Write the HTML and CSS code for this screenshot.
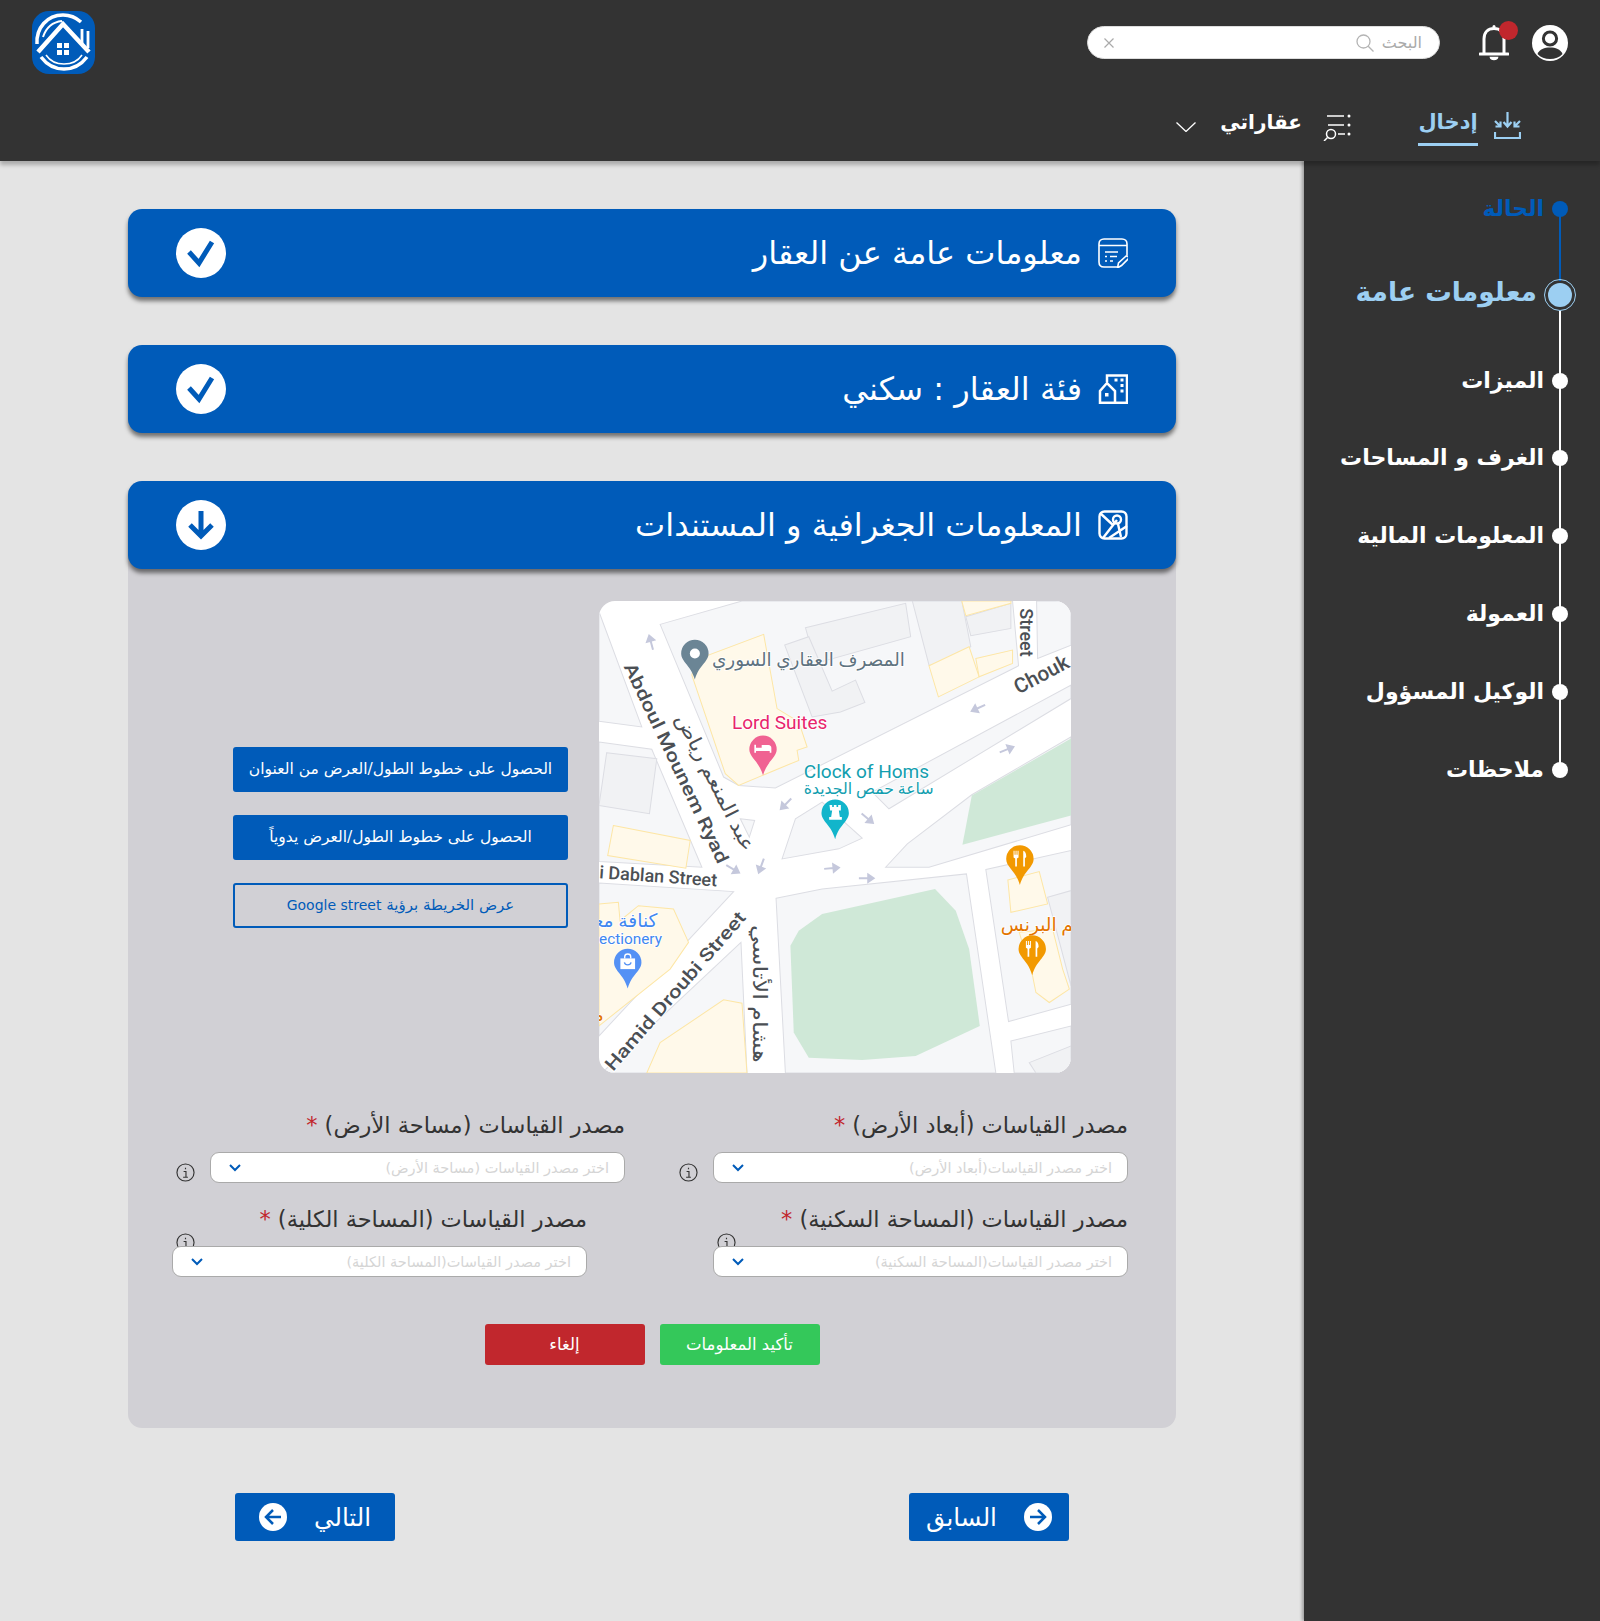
FILE: index.html
```html
<!DOCTYPE html>
<html lang="ar" dir="rtl">
<head>
<meta charset="utf-8">
<title>عقاراتي</title>
<link rel="stylesheet" href="styles.css">
</head>
<body>
<header class="topbar">
  <div class="topbar-row">
    <svg class="ic-user" viewBox="0 0 36 36"><circle cx="18" cy="18" r="18" fill="#fff"/><circle cx="18" cy="13.5" r="6.6" fill="none" stroke="#333" stroke-width="3"/><path d="M5.5 29c2-5 7-6.500 12.500-6.500S28.500 24 30.500 29c-3 3.500-7.500 5-12.500 5S8.500 32.500 5.500 29z" fill="#333"/></svg>
    <div class="bell-wrap">
      <svg class="ic-bell" viewBox="0 0 30 38" fill="none" stroke="#fff" stroke-width="3"><path d="M5 29V15C5 8.500 9 4.500 15 4.500S25 8.500 25 15v14"/><path d="M1 30h28" stroke-linecap="round" stroke-width="3"/><circle cx="15" cy="2.500" r="1.500" fill="#fff" stroke="none"/><path d="M11.500 33.500c.5 2.500 6.500 2.500 7 0z" fill="#fff" stroke-width="1.500"/></svg>
      <span class="bell-dot"></span>
    </div>
    <div class="search">
      <span class="search-ph">البحث</span>
      <svg class="ic-search" viewBox="0 0 18 18" fill="none" stroke="#b4b4b4" stroke-width="1.300"><circle cx="7.500" cy="7.500" r="6.500"/><path d="M12.200 12.200L17.500 17.500"/></svg>
      <svg class="ic-x" viewBox="0 0 10 10" fill="none" stroke="#aaa" stroke-width="1.200"><path d="M0.500 0.500l9 9M9.500 0.500l-9 9"/></svg>
    </div>
    <svg class="logo" viewBox="0 0 63 63">
      <rect width="63" height="63" rx="17" fill="#005bb9"/>
      <g fill="none" stroke="#fff">
        <path d="M5 33C4 17 15 4 31 4c7 0 13 2.500 18 7" stroke-width="3.500"/>
        <path d="M11 26C14 17 21 11 30 10" stroke-width="2"/>
        <path d="M6 41L31 13l26 28" stroke-width="4.500"/>
        <path d="M50 18v14M56 20v17" stroke-width="2.800"/>
        <path d="M9 46c6 8 13 12 23 12s17-4 23-12" stroke-width="3.500"/>
        <path d="M14 44c4 6 10 9 18 9s14-3 18-9" stroke-width="1.500"/>
      </g>
      <path d="M25 32h5v5h-5zM32 32h5v5h-5zM25 39h5v5h-5zM32 39h5v5h-5z" fill="#fff"/>
    </svg>
  </div>
  <nav class="topbar-nav">
    <a class="nav-tab">
      <svg class="ic-in" viewBox="0 0 27 27" fill="none" stroke="#9ccff2" stroke-width="2.200"><path d="M13.500 0v14M9.500 10l4 4.500 4-4.500"/><path d="M1 9l5 5M6.500 9.500v5h-5M26 9l-5 5M20.500 9.500v5h5"/><path d="M1 20v6h25v-6"/></svg>
      <span class="nav-tab-text">إدخال</span>
    </a>
    <a class="nav-menu">
      <svg class="ic-filter" viewBox="0 0 28 27" fill="none" stroke="#fff" stroke-width="1.500"><path d="M4 2h17M5 11h16M15 20h7"/><circle cx="26" cy="2" r="1.500" fill="#fff" stroke="none"/><circle cx="26" cy="11" r="1.500" fill="#fff" stroke="none"/><circle cx="26" cy="20" r="1.500" fill="#fff" stroke="none"/><circle cx="8" cy="20" r="4.500"/><path d="M4.500 23.500L1 27"/></svg>
      <span class="nav-menu-text">عقاراتي</span>
      <svg class="ic-chev" viewBox="0 0 20 10" fill="none" stroke="#fff" stroke-width="1.300"><path d="M.5.500L10 9.500 19.500.500"/></svg>
    </a>
  </nav>
</header>

<div class="layout">
  <aside class="sidebar">
    <ol class="steps">
      <li class="step step-done"><span class="step-dot"></span><span>الحالة</span></li>
      <li class="step step-active"><span class="step-dot"></span><span class="step-label">معلومات عامة</span></li>
      <li class="step"><span class="step-dot"></span><span>الميزات</span></li>
      <li class="step"><span class="step-dot"></span><span>الغرف و المساحات</span></li>
      <li class="step"><span class="step-dot"></span><span>المعلومات المالية</span></li>
      <li class="step"><span class="step-dot"></span><span>العمولة</span></li>
      <li class="step"><span class="step-dot"></span><span>الوكيل المسؤول</span></li>
      <li class="step"><span class="step-dot"></span><span>ملاحظات</span></li>
    </ol>
  </aside>

  <main class="content">
    <section class="acc">
      <svg class="acc-icon" viewBox="0 0 30 30" fill="none" stroke="#fff" stroke-width="1.600"><path d="M29 17V6c0-3-2-5-5-5H6C3 1 1 3 1 6v18c0 3 2 5 5 5h13"/><path d="M1 7.500h28M7 14h13M7 18.500h2M12 18.500h7M7 23h2M12 23h3"/><path d="M19.500 30l1-5 7-6.500c2-1.500 4 .5 2.500 2.500L23.500 27.500z" fill="#005bb9"/></svg>
      <h2 class="acc-title">معلومات عامة عن العقار</h2>
      <svg class="acc-state" viewBox="0 0 50 50"><circle cx="25" cy="25" r="25" fill="#fff"/><path d="M13 24l10 11L36 14" fill="none" stroke="#005bb9" stroke-width="5"/></svg>
    </section>
    <section class="acc">
      <svg class="acc-icon" viewBox="0 0 30 30" fill="none" stroke="#fff" stroke-width="2.500"><path d="M9 8V1.500h20V29H2V17l7-8 8 8v12"/><path d="M16.500 4.500h3v3h-3zM22.500 4.500h3v3h-3zM20 10.500h2M22.500 10h3v3h-3zM20 16h2M22.500 15.500h3v3h-3zM7 19h3.500v3.500H7z" fill="#fff" stroke="none"/><path d="M2 29h27" stroke-width="2.600"/></svg>
      <h2 class="acc-title">فئة العقار : سكني</h2>
      <svg class="acc-state" viewBox="0 0 50 50"><circle cx="25" cy="25" r="25" fill="#fff"/><path d="M13 24l10 11L36 14" fill="none" stroke="#005bb9" stroke-width="5"/></svg>
    </section>

    <section class="panel">
      <div class="acc acc-open">
        <svg class="acc-icon" viewBox="0 0 30 30" fill="none" stroke="#fff" stroke-width="2.400"><rect x="1.500" y="1.500" width="27" height="27" rx="5"/><path d="M2 3l13 12M5 28L19 10M20 14l3 13M11 28l18-12"/><circle cx="19" cy="9.500" r="4"/></svg>
        <h2 class="acc-title">المعلومات الجغرافية و المستندات</h2>
        <svg class="acc-state" viewBox="0 0 50 50"><circle cx="25" cy="25" r="25" fill="#fff"/><path d="M25 11v24M14 25l11 11 11-11" fill="none" stroke="#005bb9" stroke-width="5"/></svg>
      </div>

      <div class="geo-row">
        <svg class="map" viewBox="12 18 1413 1413">
          <rect x="12" y="18" width="1413" height="1413" fill="#fff"/>
          <g class="blk">
            <polygon points="195,88 440,18 1250,18 1268,212 540,578 430,570 385,545"/>
            <polygon points="1322,18 1425,18 1425,150 1325,190"/>
            <polygon points="12,50 140,395 12,378"/>
            <polygon points="12,440 170,462 320,815 12,798"/>
            <polygon points="12,862 415,888 12,1320"/>
            <polygon points="437,1040 455,1431 20,1431"/>
            <polygon points="542,908 680,880 1112,835 1200,1431 570,1431"/>
            <polygon points="1170,822 1425,765 1425,1225 1238,1277"/>
            <polygon points="1245,1335 1425,1290 1425,1431 1255,1431"/>
            <polygon points="870,815 935,745 1128,598 1425,425 1425,688 1000,815"/>
            <polygon points="560,790 600,670 680,620 800,728 730,760"/>
            <polygon points="435,670 478,675 462,725"/>
            <polygon points="830,590 880,640 1425,310 1425,270"/>
          </g>
          <g class="bld">
            <polygon points="630,98 930,25 945,125 660,205"/>
            <polygon points="568,150 640,125 710,288 780,255 808,322 735,350 650,365"/>
            <polygon points="950,18 1098,18 1125,155 1020,210 1000,210"/>
            <polygon points="1110,65 1245,25 1245,100 1125,122"/>
            <polygon points="35,472 185,490 163,655 12,630"/>
            <polygon points="1355,905 1425,885 1425,1170"/>
            <polygon points="1375,570 1425,545 1425,620 1385,605"/>
            <polygon points="1300,1400 1425,1350 1425,1431 1320,1431"/>
          </g>
          <g class="ylw">
            <polygon points="1098,18 1245,18 1245,25 1110,62"/>
            <polygon points="1000,212 1120,155 1150,245 1028,305"/>
            <polygon points="1140,190 1250,165 1250,205 1150,245"/>
            <polygon points="290,240 300,195 505,118 545,340 610,380 635,455 605,465 610,495 430,570 390,535"/>
            <polygon points="55,690 285,735 272,818 38,780"/>
            <polygon points="12,925 70,920 75,975 130,930 235,940 280,1040 225,1120 12,1290"/>
            <polygon points="155,1431 195,1340 385,1212 440,1222 455,1431"/>
            <polygon points="1236,853 1330,828 1355,925 1245,950"/>
            <polygon points="1270,1010 1370,1000 1400,1120 1420,1180 1360,1220 1320,1190 1310,1140"/>
          </g>
          <g class="grn">
            <polygon points="585,1050 610,1005 680,955 1018,880 1080,945 1120,1060 1152,1290 960,1380 800,1392 640,1385 595,1310"/>
            <polygon points="1128,600 1425,430 1425,660 1100,748"/>
          </g>
          <g class="arw">
            <path d="M-22 0H6M6-11L22 0 6 11z" transform="translate(168,143) rotate(-105)"/>
            <path d="M-22 0H6M6-11L22 0 6 11z" transform="translate(1148,338) rotate(155)"/>
            <path d="M-22 0H6M6-11L22 0 6 11z" transform="translate(1232,463) rotate(-22)"/>
            <path d="M-22 0H6M6-11L22 0 6 11z" transform="translate(572,625) rotate(135)"/>
            <path d="M-22 0H6M6-11L22 0 6 11z" transform="translate(815,668) rotate(40)"/>
            <path d="M-22 0H6M6-11L22 0 6 11z" transform="translate(412,820) rotate(30)"/>
            <path d="M-22 0H6M6-11L22 0 6 11z" transform="translate(498,810) rotate(110)"/>
            <path d="M-22 0H6M6-11L22 0 6 11z" transform="translate(708,818) rotate(-5)"/>
            <path d="M-22 0H6M6-11L22 0 6 11z" transform="translate(812,848)"/>
          </g>
          <g class="road">
            <text transform="translate(85,214) rotate(64.500)" textLength="658" lengthAdjust="spacingAndGlyphs">Abdoul Mounem Ryad</text>
            <text class="ar" transform="translate(240,368) rotate(63)" textLength="452" lengthAdjust="spacingAndGlyphs">عبد المنعم رياض</text>
            <text transform="translate(12,848) rotate(4)" textLength="353" lengthAdjust="spacingAndGlyphs">i Dablan Street</text>
            <text transform="translate(54,1428) rotate(-49)" textLength="610" lengthAdjust="spacingAndGlyphs">Hamid Droubi Street</text>
            <text class="ar" transform="translate(472,988) rotate(90)" textLength="412" lengthAdjust="spacingAndGlyphs">هشام الأتاسي</text>
            <text class="road-big" transform="translate(1268,298) rotate(-28)">Chouk</text>
            <text transform="translate(1272,40) rotate(90)" textLength="145" lengthAdjust="spacingAndGlyphs">Street</text>
          </g>
          <g class="poi">
            <text class="poi-gray" x="350" y="214">المصرف العقاري السوري</text>
            <text class="poi-pink" x="410" y="402">Lord Suites</text>
            <text class="poi-teal" x="625" y="547">Clock of Homs</text>
            <text class="poi-teal poi-small" x="625" y="595">ساعة حمص الجديدة</text>
            <text class="poi-blue poi-ar" x="187" y="995" text-anchor="end">كنافة معجنات</text>
            <text class="poi-blue poi-lat" x="12" y="1045">ectionery</text>
            <text class="poi-orange poi-ar" x="1215" y="1005">مطعم البرنس</text>
            <text class="poi-orange poi-ar" x="26" y="1275" text-anchor="end">مطعم</text>
          </g>
          <g class="pins">
            <g transform="translate(299,175)"><path fill="#6b8595" d="M-41 0A41 41 0 1 1 41 0C41 25 12 35 0 78-12 35-41 25-41 0z"/><circle r="15" fill="#fff"/></g>
            <g transform="translate(503,462)"><path fill="#f06292" d="M-41 0A41 41 0 1 1 41 0C41 25 12 35 0 78-12 35-41 25-41 0z"/><path fill="#fff" d="M-26-14h5v9h17v-8h20c6 0 9 4 9 9v14h-5v-5h-41v5h-5z"/></g>
            <g transform="translate(719,653)"><path fill="#12b5cb" d="M-41 0A41 41 0 1 1 41 0C41 25 12 35 0 78-12 35-41 25-41 0z"/><path fill="#fff" d="M-17-24h8v6h5v-6h8v6h5v-6h8v16h-6l3 20h6v8h-38v-8h6l3-20h-6z"/></g>
            <g transform="translate(1272,790)"><path fill="#f29900" d="M-41 0A41 41 0 1 1 41 0C41 25 12 35 0 78-12 35-41 25-41 0z"/><path fill="#fff" d="M-19-24h3v12h3v-12h3v12h3v-12h3v20l-5 3v24h-5V-1l-5-3zM10-24c7 2 9 10 9 18l-4 4v25h-5z"/></g>
            <g transform="translate(1309,1060)"><path fill="#f29900" d="M-41 0A41 41 0 1 1 41 0C41 25 12 35 0 78-12 35-41 25-41 0z"/><path fill="#fff" d="M-19-24h3v12h3v-12h3v12h3v-12h3v20l-5 3v24h-5V-1l-5-3zM10-24c7 2 9 10 9 18l-4 4v25h-5z"/></g>
            <g transform="translate(98,1100)"><path fill="#5491f5" d="M-41 0A41 41 0 1 1 41 0C41 25 12 35 0 78-12 35-41 25-41 0z"/><path fill="#fff" d="M-22-12h44v32h-44z"/><path d="M-9-12v-5c0-11 18-11 18 0v5" fill="none" stroke="#fff" stroke-width="4"/><path d="M-10 0c2 10 18 10 20 0" fill="none" stroke="#5491f5" stroke-width="4"/></g>
          </g>
        </svg>
        <div class="geo-actions">
          <button class="btn btn-solid">الحصول على خطوط الطول/العرض من العنوان</button>
          <button class="btn btn-solid">الحصول على خطوط الطول/العرض يدوياً</button>
          <button class="btn btn-outline">عرض الخريطة برؤية <span class="latin">Google street</span></button>
        </div>
      </div>

      <div class="form-grid">
        <div class="field">
          <label class="field-label">مصدر القياسات (أبعاد الأرض) <em>*</em></label>
          <div class="select-wrap">
            <svg class="info info-out" viewBox="0 0 20 20" fill="none" stroke="#333" stroke-width="1.200"><circle cx="10" cy="10" r="9"/><path d="M8 9h2.500v6M7.500 15h5M10 5v1.500"/></svg>
            <div class="select"><span>اختر مصدر القياسات(أبعاد الأرض)</span><svg class="sel-chev" viewBox="0 0 12 8" fill="none" stroke="#005bb9" stroke-width="2"><path d="M1 1l5 5 5-5"/></svg></div>
          </div>
        </div>
        <div class="field">
          <label class="field-label">مصدر القياسات (مساحة الأرض) <em>*</em></label>
          <div class="select-wrap">
            <svg class="info info-out" viewBox="0 0 20 20" fill="none" stroke="#333" stroke-width="1.200"><circle cx="10" cy="10" r="9"/><path d="M8 9h2.500v6M7.500 15h5M10 5v1.500"/></svg>
            <div class="select"><span>اختر مصدر القياسات (مساحة الأرض)</span><svg class="sel-chev" viewBox="0 0 12 8" fill="none" stroke="#005bb9" stroke-width="2"><path d="M1 1l5 5 5-5"/></svg></div>
          </div>
        </div>
        <div class="field">
          <label class="field-label">مصدر القياسات (المساحة السكنية) <em>*</em></label>
          <div class="select-wrap">
            <svg class="info info-under" viewBox="0 0 20 20" fill="none" stroke="#333" stroke-width="1.200"><circle cx="10" cy="10" r="9"/><path d="M8 9h2.500v6M7.500 15h5M10 5v1.500"/></svg>
            <div class="select"><span>اختر مصدر القياسات(المساحة السكنية)</span><svg class="sel-chev" viewBox="0 0 12 8" fill="none" stroke="#005bb9" stroke-width="2"><path d="M1 1l5 5 5-5"/></svg></div>
          </div>
        </div>
        <div class="field field-shift">
          <label class="field-label">مصدر القياسات (المساحة الكلية) <em>*</em></label>
          <div class="select-wrap">
            <svg class="info info-under" viewBox="0 0 20 20" fill="none" stroke="#333" stroke-width="1.200"><circle cx="10" cy="10" r="9"/><path d="M8 9h2.500v6M7.500 15h5M10 5v1.500"/></svg>
            <div class="select"><span>اختر مصدر القياسات(المساحة الكلية)</span><svg class="sel-chev" viewBox="0 0 12 8" fill="none" stroke="#005bb9" stroke-width="2"><path d="M1 1l5 5 5-5"/></svg></div>
          </div>
        </div>
      </div>

      <div class="form-actions">
        <button class="btn-act btn-ok">تأكيد المعلومات</button>
        <button class="btn-act btn-cancel">إلغاء</button>
      </div>
    </section>

    <div class="pager">
      <button class="pager-btn pager-prev">
        <svg class="pager-ic" viewBox="0 0 28 28"><circle cx="14" cy="14" r="14" fill="#fff"/><path d="M6 14h15M14 7l7 7-7 7" fill="none" stroke="#005bb9" stroke-width="2.500"/></svg>
        <span>السابق</span>
      </button>
      <button class="pager-btn pager-next">
        <span>التالي</span>
        <svg class="pager-ic" viewBox="0 0 28 28"><circle cx="14" cy="14" r="14" fill="#fff"/><path d="M22 14H7M14 7l-7 7 7 7" fill="none" stroke="#005bb9" stroke-width="2.500"/></svg>
      </button>
    </div>
  </main>
</div>
</body>
</html>
```
FILE: styles.css
```css
* { box-sizing: border-box; }
html, body { margin: 0; padding: 0; }
body {
  width: 1600px;
  height: 1621px;
  overflow: hidden;
  background: #e4e4e4;
  font-family: "DejaVu Sans", "Noto Sans", sans-serif;
  color: #333;
}

/* top bar */
.topbar {
  position: relative;
  z-index: 3;
  height: 161px;
  background: #333;
  padding: 11px 32px 0 32px;
  box-shadow: 0 4px 4px rgba(0,0,0,.25);
}
.topbar-row { display: flex; align-items: center; height: 63px; }
.ic-user { width: 36px; height: 36px; }
.bell-wrap { position: relative; width: 30px; height: 38px; margin-right: 23px; }
.ic-bell { width: 30px; height: 38px; display: block; }
.bell-dot {
  position: absolute; left: 20px; top: -3px;
  width: 19px; height: 19px; border-radius: 50%; background: #c1272d;
}
.search {
  display: flex; align-items: center;
  width: 353px; height: 33px; margin-right: 39px; padding: 0 17px 0 16px;
  background: #fff; border: 1px solid #ddd; border-radius: 17px;
}
.search-ph { font-size: 16px; color: #aaa; }
.ic-search { width: 18px; height: 18px; margin-right: 8px; }
.ic-x { width: 10px; height: 10px; margin-right: auto; }
.logo { width: 63px; height: 63px; margin-right: auto; }

.topbar-nav { display: flex; align-items: flex-start; margin-top: 36px; padding-right: 47px; }
.nav-tab { display: flex; align-items: flex-start; }
.ic-in { width: 27px; height: 27px; margin-top: 2px; }
.nav-tab-text {
  margin-right: 16px; width: 60px; height: 36px; text-align: center;
  font-size: 21px; line-height: 25px; font-weight: 700; color: #9ccff2;
  border-bottom: 3px solid #9ccff2; white-space: nowrap;
}
.nav-menu { display: flex; align-items: flex-start; margin-right: 67px; }
.ic-filter { width: 28px; height: 27px; margin-top: 4px; }
.nav-menu-text { margin-right: 21px; font-size: 20px; line-height: 25px; font-weight: 700; color: #fff; white-space: nowrap; }
.ic-chev { width: 20px; height: 10px; margin: 12px 24px 0 0; }

/* layout */
.layout { display: flex; height: 1460px; }
.sidebar {
  width: 296px; background: #333; padding-top: 36px;
  box-shadow: -2px 0 3px rgba(0,0,0,.3);
  position: relative; z-index: 2;
}
.steps {
  position: relative;
  list-style: none; margin: 0; padding: 0 32px 0 0;
  display: grid;
  grid-template-rows: 86px 86px 77px 78px 78px 78px 78px 24px;
}
.steps::before {
  content: ""; position: absolute; right: 39px; top: 114px; height: 460px; width: 2px; background: #fff;
}
.steps::after {
  content: ""; position: absolute; right: 39px; top: 12px; height: 72px; width: 2px; background: #005bb9;
}
.step {
  position: relative; z-index: 1;
  display: flex; align-items: center; gap: 8px; height: 24px;
  font-size: 22px; font-weight: 700; color: #fff; white-space: nowrap; line-height: 24px;
}
.step-dot { width: 16px; height: 16px; border-radius: 50%; background: #fff; flex: none; }
.step-done { color: #005bb9; }
.step-done .step-dot { background: #005bb9; }
.step-active { color: #9ccff2; font-size: 26.500px; margin-right: -8px; gap: 7px; }
.step-active .step-dot {
  width: 32px; height: 32px; background: #9ccff2; background-clip: content-box;
  padding: 3px; border: 1px solid #9ccff2;
}
.step-label { margin-bottom: 7px; }

/* content */
.content { width: 1304px; padding: 48px 128px 0 128px; }
.acc {
  position: relative;
  display: flex; align-items: center;
  height: 88px; margin-bottom: 48px; padding: 0 48px;
  background: #005bb9; border-radius: 14px;
  box-shadow: 0 4px 4px rgba(0,0,0,.5);
}
.acc-open { margin-bottom: 0; }
.acc-icon { width: 30px; height: 30px; flex: none; }
.acc-title { margin: 0 16px 0 0; font-size: 32px; font-weight: 400; color: #fff; white-space: nowrap; }
.acc-state { width: 50px; height: 50px; margin-right: auto; }

.panel { background: #d1d0d5; border-radius: 14px; height: 947px; }
.geo-row { display: flex; align-items: center; padding: 32px 105px 0 0; gap: 31px; }
.map { width: 472px; height: 472px; border-radius: 16px; flex: none; display: block; direction: ltr; }
.map text { font-family: Roboto, "DejaVu Sans", sans-serif; }
.blk polygon { fill: #f6f7f9; stroke: #dcdde3; stroke-width: 3; }
.bld polygon { fill: #f1f2f4; stroke: #dcdde3; stroke-width: 3; }
.ylw polygon { fill: #fff9ea; stroke: #fde6a5; stroke-width: 3; }
.grn polygon { fill: #cfe8d7; }
.arw path { fill: #c5c8dc; stroke: #c5c8dc; stroke-width: 6; }
.road text {
  font-size: 54px; font-weight: 500; fill: #4b4f54;
  stroke: #fff; stroke-width: 6px; paint-order: stroke;
}
.road .ar { font-size: 58px; font-weight: 400; }
.road .road-big { font-size: 62px; }
.poi text { font-size: 57px; stroke: #fff; stroke-width: 5px; paint-order: stroke; }
.poi .poi-small { font-size: 47px; }
.poi .poi-gray { fill: #5f7380; font-size: 55px; }
.poi .poi-ar { font-size: 56px; }
.poi .poi-lat { font-size: 46px; }
.poi-pink { fill: #e8246c; }
.poi-teal { fill: #129eaf; }
.poi-blue { fill: #3f87f0; }
.poi-orange { fill: #e37400; }

.geo-actions { display: flex; flex-direction: column; gap: 23px; width: 335px; }
.btn {
  height: 45px; border-radius: 3px; font-family: inherit; font-size: 15.500px; padding: 0;
  border: 2px solid #005bb9; cursor: pointer; white-space: nowrap;
}
.btn-solid { background: #005bb9; color: #fff; }
.btn-outline { background: transparent; color: #005bb9; font-size: 15px; }
.latin { font-size: 14px; }

.form-grid {
  display: grid; grid-template-columns: 503px 503px; padding-top: 37px; row-gap: 21px; margin: 0;
  justify-content: start;
}
.field { padding-right: 48px; }
.field-shift { padding-right: 86px; }
.field-label { display: block; height: 42px; font-size: 22.500px; line-height: 30px; color: #333; white-space: nowrap; }
.field-label em { font-style: normal; color: #c1272d; }
.select-wrap { position: relative; width: 415px; }
.select {
  position: relative; z-index: 1;
  display: flex; align-items: center; justify-content: space-between;
  height: 31px; padding: 0 15px 0 18px;
  background: #fff; border: 1px solid #aaa; border-radius: 9px;
  font-size: 14.500px; color: #d5d5d5; white-space: nowrap;
}
.sel-chev { width: 12px; height: 8px; }
.info { position: absolute; width: 19px; height: 19px; }
.info-out { left: -34px; top: 11px; }
.info-under { left: 4px; top: -13px; }

.form-actions { display: flex; justify-content: center; gap: 15px; padding-top: 47px; }
.btn-act {
  width: 160px; height: 41px; border: 0; border-radius: 3px; font-family: inherit;
  font-size: 16.500px; color: #fff;
}
.btn-ok { background: #34c85a; }
.btn-cancel { background: #c1272d; }

.pager { display: flex; justify-content: space-between; padding: 65px 107px 0; }
.pager-btn {
  display: flex; align-items: center; justify-content: center; gap: 27px;
  width: 160px; height: 48px; border: 0; border-radius: 3px;
  background: #005bb9; color: #fff; font-family: inherit; font-size: 24.500px;
}
.pager-ic { width: 28px; height: 28px; flex: none; }
```
